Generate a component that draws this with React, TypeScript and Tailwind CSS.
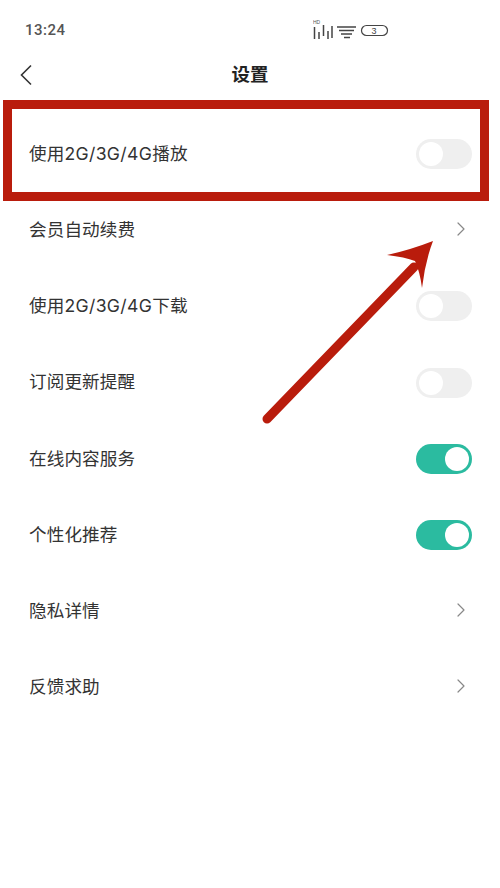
import { ChevronRight } from "lucide-react";

const rows: { label: string; kind: "off" | "on" | "link" }[] = [
  { label: "使用2G/3G/4G播放", kind: "off" },
  { label: "会员自动续费", kind: "link" },
  { label: "使用2G/3G/4G下载", kind: "off" },
  { label: "订阅更新提醒", kind: "off" },
  { label: "在线内容服务", kind: "on" },
  { label: "个性化推荐", kind: "on" },
  { label: "隐私详情", kind: "link" },
  { label: "反馈求助", kind: "link" },
];

function Toggle({ on }: { on: boolean }) {
  if (on) {
    return (
      <div className="mr-[28px] flex h-[30px] w-[56px] items-center justify-end rounded-full bg-[#2bbba0] pr-[3px]">
        <div className="h-[24px] w-[24px] rounded-full bg-white" />
      </div>
    );
  }
  return (
    <div className="mr-[28px] flex h-[30px] w-[56px] items-center rounded-full bg-[#efefef] pl-[3px]">
      <div className="h-[24px] w-[24px] rounded-full bg-white" />
    </div>
  );
}

function StatusIcons() {
  return (
    <svg width="76" height="22" viewBox="0 0 76 22" fill="none" stroke="#444" className="mr-[111px]">
      <text x="0" y="5" fontSize="5" fill="#555" stroke="none" fontFamily="Liberation Sans, sans-serif">HD</text>
      <path d="M1.500 8v12M6 13v7M10.500 6v11M15 12v8M19 7v12" strokeWidth="1.500" />
      <path d="M24 8h19M26 11.500h15M28 15h11M31 18.500h6" strokeWidth="1.500" />
      <rect x="48.500" y="6.500" width="26" height="10" rx="5" strokeWidth="1.200" />
      <text x="58.500" y="15" fontSize="9" fill="#444" stroke="none" fontFamily="Liberation Sans, sans-serif">3</text>
    </svg>
  );
}

export default function App() {
  return (
    <div className="relative h-[888px] w-[500px] overflow-hidden bg-white font-['Inter','Noto_Sans_CJK_SC',sans-serif] text-[#333]">
      <div className="flex h-[50px] items-center justify-between pl-[25px] pt-[10px]">
        <span className="font-['Roboto',sans-serif] text-[15px] font-medium tracking-[0.5px] text-[#555]">13:24</span>
        <StatusIcons />
      </div>
      <div className="relative flex h-[50px] items-center justify-center">
        <svg width="14" height="22" viewBox="0 0 14 22" fill="none" stroke="#333" strokeWidth="1.600" className="absolute left-[19px] top-[14px]">
          <path d="M12 1.500 2.500 11 12 20.500" />
        </svg>
        <span className="text-[18.5px] font-bold text-[#222]">设置</span>
      </div>
      <div className="pt-[16px]">
        {rows.map((row) => (
          <div key={row.label} className="flex h-[76.2px] items-center justify-between pl-[29px]">
            <span className="text-[17.6px] tracking-[0.1px] text-[#333]">
              {row.label.split(/(2G\/3G\/4G)/).map((part) => (
                <span key={part} className={part.startsWith("2G") ? "tracking-[0.35px]" : ""}>{part}</span>
              ))}
            </span>
            {row.kind === "link" ? (
              <ChevronRight size={24} strokeWidth={1.2} className="mb-[2px] mr-[27px] text-[#888]" />
            ) : (
              <Toggle on={row.kind === "on"} />
            )}
          </div>
        ))}
      </div>
      {/* annotation over the screenshot */}
      <div className="absolute left-[3px] top-[100px] h-[101px] w-[486px] border-[9px] border-[#b91c0c]" />
      <svg width="500" height="888" viewBox="0 0 500 888" className="pointer-events-none absolute left-0 top-0">
        <path d="M267 419 L414 267" stroke="#b91c0c" strokeWidth="9" strokeLinecap="round" />
        <path d="M433 241 Q 410 250 387 255 Q 405 257 415 261 Q 420 272 422 288 Q 425 262 433 241 Z" fill="#b91c0c" />
      </svg>
    </div>
  );
}
